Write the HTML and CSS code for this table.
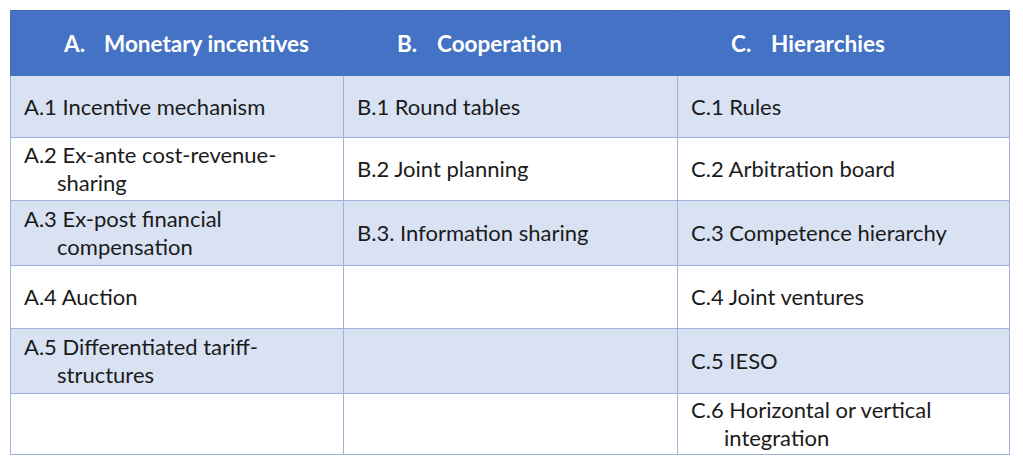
FILE: index.html
```html
<!DOCTYPE html>
<html>
<head>
<meta charset="utf-8">
<link rel="stylesheet" href="styles.css">
</head>
<body>
<div class="page">
<table class="grid">
  <colgroup>
    <col class="c1"><col class="c2"><col class="c3">
  </colgroup>
  <thead>
    <tr class="head">
      <th><span class="num">A.</span>Monetary incentives</th>
      <th><span class="num">B.</span>Cooperation</th>
      <th><span class="num">C.</span>Hierarchies</th>
    </tr>
  </thead>
  <tbody>
    <tr class="band r1">
      <td><div class="item">A.1 Incentive mechanism</div></td>
      <td><div class="item">B.1 Round tables</div></td>
      <td><div class="item">C.1 Rules</div></td>
    </tr>
    <tr class="r2">
      <td><div class="item">A.2 Ex-ante cost-revenue-sharing</div></td>
      <td><div class="item">B.2 Joint planning</div></td>
      <td><div class="item">C.2 Arbitration board</div></td>
    </tr>
    <tr class="band r3">
      <td><div class="item">A.3 Ex-post financial compensation</div></td>
      <td><div class="item">B.3. Information sharing</div></td>
      <td><div class="item">C.3 Competence hierarchy</div></td>
    </tr>
    <tr class="r4">
      <td><div class="item">A.4 Auction</div></td>
      <td></td>
      <td><div class="item">C.4 Joint ventures</div></td>
    </tr>
    <tr class="band r5">
      <td><div class="item">A.5 Differentiated tariff-structures</div></td>
      <td></td>
      <td><div class="item">C.5 IESO</div></td>
    </tr>
    <tr class="r6">
      <td></td>
      <td></td>
      <td><div class="item">C.6 Horizontal or vertical integration</div></td>
    </tr>
  </tbody>
</table>
</div>
</body>
</html>
```

FILE: styles.css
```css
html, body {
  margin: 0;
  padding: 0;
  background: #ffffff;
}
.page {
  padding: 10px 14px 0 10px;
}
.grid {
  border-collapse: collapse;
  table-layout: fixed;
  width: 999px;
  font-family: Lato, "Open Sans", sans-serif;
  font-size: 22px;
  color: #1b1b1b;
}
.c1 { width: 333px; }
.c2 { width: 334px; }
.c3 { width: 332px; }
.head th {
  background: #4472c4;
  color: #ffffff;
  font-weight: 700;
  font-size: 22.5px;
  text-align: left;
  height: 64px;
  padding: 0 0 0 53px;
  border: 1px solid #4472c4;
  border-top-color: #3d66b0;
  vertical-align: middle;
}
.num {
  display: inline-block;
  width: 40px;
}
td {
  border: 1px solid #9fb3d9;
  padding: 0 12px 0 13px;
  vertical-align: middle;
  line-height: 28px;
}
.band td { background: #d9e2f3; }
.r1 td { height: 61px; }
.r2 td { height: 62px; }
.r3 td { height: 64px; }
.r4 td { height: 62px; }
.r5 td { height: 64px; }
.r6 td { height: 60px; }
.item {
  padding-left: 33px;
  text-indent: -33px;
}
```
